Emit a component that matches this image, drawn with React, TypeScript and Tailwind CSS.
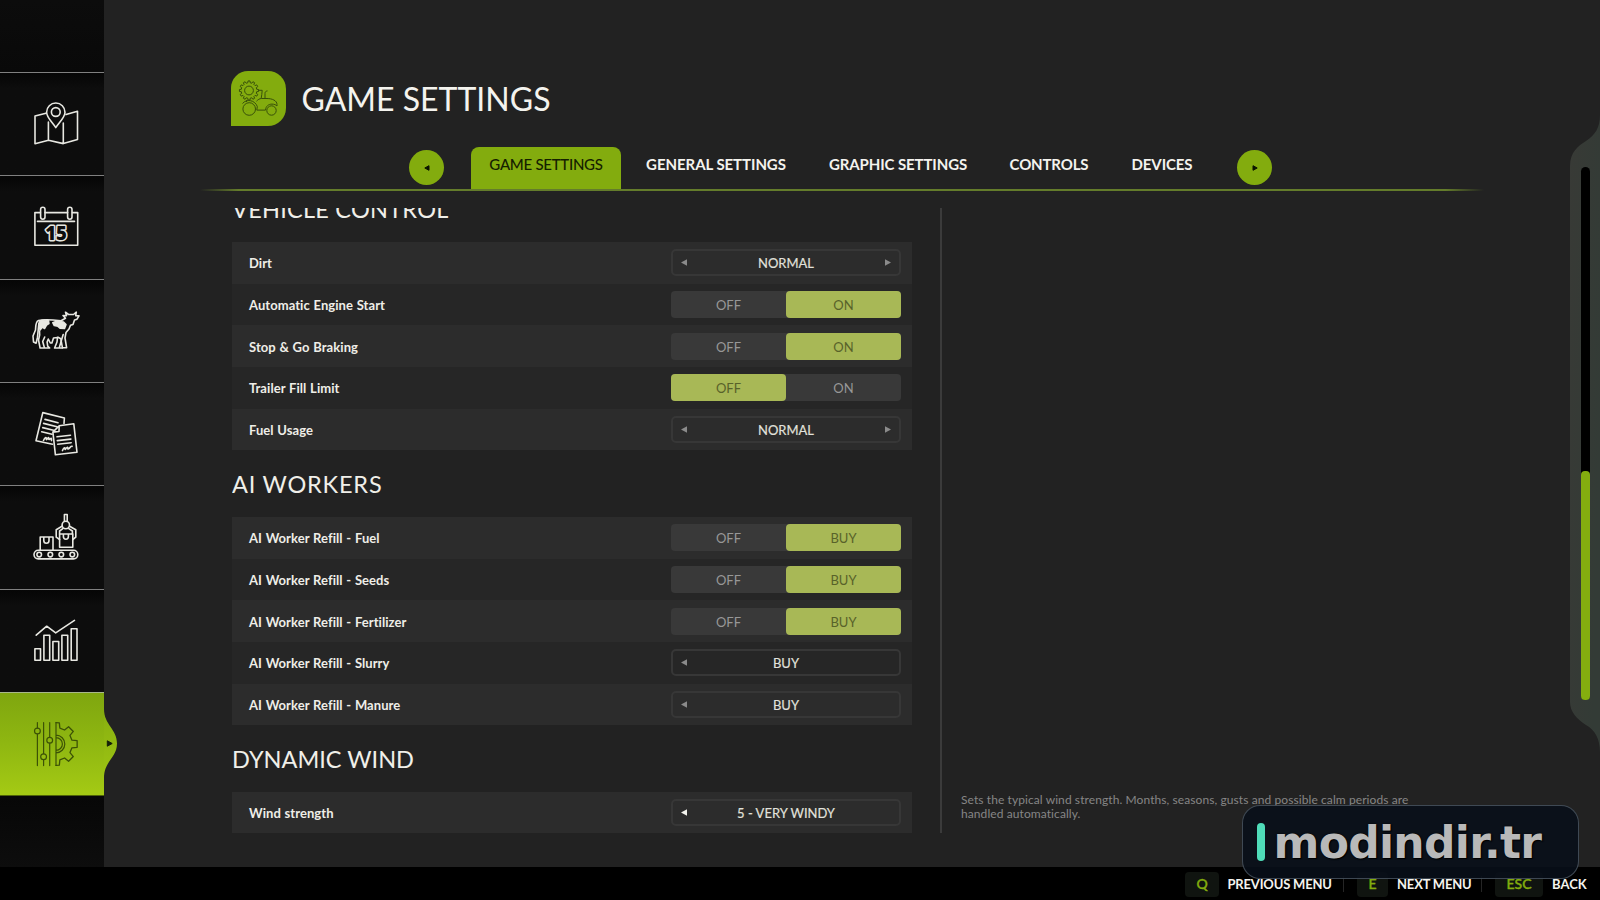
import type { ReactNode } from "react";
import clsx from "clsx";

type Setting = {
  label: string;
  kind: "select" | "toggle";
  value: string;
  options?: [string, string];
  next?: boolean;
  focused?: boolean;
};

const sections: { title: string; titleClass: string; rows: Setting[] }[] = [
  {
    title: "VEHICLE CONTROL",
    titleClass: "pt-px tracking-[0.25px]",
    rows: [
      { label: "Dirt", kind: "select", value: "NORMAL", next: true },
      { label: "Automatic Engine Start", kind: "toggle", value: "ON", options: ["OFF", "ON"] },
      { label: "Stop & Go Braking", kind: "toggle", value: "ON", options: ["OFF", "ON"] },
      { label: "Trailer Fill Limit", kind: "toggle", value: "OFF", options: ["OFF", "ON"] },
      { label: "Fuel Usage", kind: "select", value: "NORMAL", next: true },
    ],
  },
  {
    title: "AI WORKERS",
    titleClass: "pt-[3px] tracking-[0.8px]",
    rows: [
      { label: "AI Worker Refill - Fuel", kind: "toggle", value: "BUY", options: ["OFF", "BUY"] },
      { label: "AI Worker Refill - Seeds", kind: "toggle", value: "BUY", options: ["OFF", "BUY"] },
      { label: "AI Worker Refill - Fertilizer", kind: "toggle", value: "BUY", options: ["OFF", "BUY"] },
      { label: "AI Worker Refill - Slurry", kind: "select", value: "BUY" },
      { label: "AI Worker Refill - Manure", kind: "select", value: "BUY" },
    ],
  },
  {
    title: "DYNAMIC WIND",
    titleClass: "pt-[3px] tracking-normal",
    rows: [{ label: "Wind strength", kind: "select", value: "5 - VERY WINDY", focused: true }],
  },
];

// Outline of a cog between two angles (degrees, clockwise from the top)
function cogPath(cx: number, cy: number, root: number, tip: number, teeth: number, from: number, to: number) {
  const step = 360 / teeth;
  const full = to - from >= 330;
  const at = (r: number, deg: number) => {
    const a = ((deg - 90) * Math.PI) / 180;
    return `${(cx + r * Math.cos(a)).toFixed(2)} ${(cy + r * Math.sin(a)).toFixed(2)}`;
  };
  const pts: string[] = [];
  for (let t = from; t <= to + 0.01; t += step) {
    if (full || t - step * 0.3 >= from) {
      pts.push(at(root, t - step * 0.3), at(tip, t - step * 0.2));
    } else {
      pts.push(at(tip, t));
    }
    if (full || t + step * 0.3 <= to) {
      pts.push(at(tip, t + step * 0.2), at(root, t + step * 0.3));
    } else {
      pts.push(at(tip, t));
    }
  }
  return `M${pts.join("L")}${full ? "Z" : ""}`;
}

function MapIcon() {
  return (
    <>
      <path d="M46 41.2 35 44v27.8l13.500-3.600L63.300 71.600l14.200-4V39.200L66 42.600M48.400 50v18M63.300 51v20" />
      <path d="M55.800 55.600C53 51 46.600 45.600 46.600 40.200a9.200 9.200 0 0 1 18.400 0C65 45.600 58.600 51 55.800 55.600Z" />
      <circle cx="55.8" cy="40" r="4.4" />
    </>
  );
}

function CalendarIcon() {
  return (
    <>
      <path d="M40.400 37.600H34.900v32.700h42.800V37.600h-5.200M45 37.600h22.600M37.500 46.400h37" />
      <rect x="40.600" y="32.200" width="4.400" height="12" rx="2.200" />
      <rect x="67.600" y="32.200" width="4.400" height="12" rx="2.200" />
      <text
        x="56"
        y="65"
        textAnchor="middle"
        fontFamily="Open Sans"
        fontWeight="800"
        fontSize="18.500"
        strokeWidth="3"
        fill="#0d0d0d"
        style={{ paintOrder: "stroke" }}
      >
        15
      </text>
    </>
  );
}

function CowIcon() {
  return (
    <>
      <path d="M38.500 41.500c6-1.400 15-.6 22.500.2l4.500-2.500-2.500-2.700 3.500.2-1-3.500 3 2.300h5l2.800-2.300-.6 3.500 3.300.2-2 3.300-2.500.7-1.500 4.600-2.500.8-1.500 3.700-3 3.500-1 5.500 1.600 9.700h-4.200l-1.600-9-2.800-1.500M38.500 41.500c-3 1-2.600 5-3 9.500l-2.500 6 .5 6 2.600 1.200 1.400-6 .8-8 .6-6" />
      <path d="M39.500 52c.8 3.500-.4 7-1 9l1.600 8h9.600l-2-1.800-.6-4.200 1.200-3 2 4h1.600l1.600-5 4-.5-.5 4.500-2.400 6h4.600l2-7 2-6.500M44.500 69l-1.800-6.500 2-4.500M59.500 69h3" />
      <path
        fill="currentColor"
        d="M39.500 42c3-1 7-1 9-.4l.4 3-2.400 1.400-2 3.500-2-1.400-2.500 3-.8-5ZM56.500 42.200l7 .8 2.500 2.500-1.500 4-4.500-.4-2-1.800-3.700-.8-1.500-2.800Z"
      />
    </>
  );
}

function ContractsIcon() {
  return (
    <>
      <path d="m64 41.500.4-5.500-21.600-5.400-6.800 28.200L52.500 62.200" />
      <path d="m45 37.400 13 3.300M43.600 41.400l13.400 3.300M42.700 45.600l10.800 2.700M41.700 49.700l10.300 2.500M43.500 58.500c1.500-3 3-4 2.800-1.600s1.800-2 2.400-1.200-.8 2.500 1.200 1.300 1.600-.6 1.600 1.600" />
      <path d="m59.200 43.700 14.600-1.900 3.200 28.500-21.600 2.500-2.500-22.700 6.300-6.400Zm0 0-.2 5.800-6.100.6" />
      <path d="m57 54.800 13.500-1.600M57.300 58.600l13.600-1.500M57.700 62.200l13.500-1.500M62.500 68.600c1-2.800 2.600-3.800 2.500-1.700s1.700-2.200 2.500-1.700-.4 2.400 1.100 1.500 2.400-3 3.500-2.400" />
    </>
  );
}

function ProductionIcon() {
  return (
    <>
      <rect x="34" y="65.300" width="43.800" height="8.600" rx="4.300" />
      <circle cx="39.200" cy="69.600" r="2.300" />
      <circle cx="50.300" cy="69.600" r="2.300" />
      <circle cx="61.300" cy="69.600" r="2.300" />
      <circle cx="72.300" cy="69.600" r="2.300" />
      <path d="M40.200 65V52h12.800v13M43.800 52v3.500c0 3.700 5.200 3.700 5.200 0V52M59.600 49h13.200v13.300H59.600ZM63.400 49v2.500c0 3.600 5 3.600 5 0V49" />
      <path d="M64.400 36.300v-6.800h2.800v6.800M62 41.300l-5.800 3.400v7.500l3.400 2.300M69.600 41.300l6.200 3.400v7.500l-3 2.300M62.800 43.600l-3.200 2.400V49M68.800 43.600l3.600 2.400V49" />
      <circle cx="65.800" cy="40" r="3.700" />
    </>
  );
}

function StatisticsIcon() {
  return (
    <path d="M34.900 59.700h5.600v11.500h-5.600ZM43.900 46.200h5.800v25h-5.800ZM52.900 52.500h5.800v18.700h-5.800ZM61.900 46.200h5.800v25h-5.800ZM71.200 39.800H77v31.400h-5.800ZM36.200 46.200l10.500-9 9 6.700 18.800-12.500" />
  );
}

function SettingsIcon() {
  return (
    <>
      <path d="M37.400 30.500v5.600M37.400 42v31.600M43.600 30.500v31.200M43.600 67.600v6M49.700 30.500v14.800M49.700 51.200v22.400" />
      <circle cx="37.400" cy="39" r="2.900" />
      <circle cx="43.600" cy="64.700" r="2.900" />
      <circle cx="49.700" cy="48.300" r="2.900" />
      <path strokeWidth="1.300" d={cogPath(56, 52, 16.400, 21.400, 8, 0, 180)} />
      <path d="M56 30.600V73.400M56 43.200a8.800 8.800 0 0 1 0 17.600M56 45.600a6.400 6.400 0 0 1 0 12.800" />
    </>
  );
}

const menu: { id: string; icon: ReactNode; active?: boolean }[] = [
  { id: "map", icon: <MapIcon /> },
  { id: "calendar", icon: <CalendarIcon /> },
  { id: "animals", icon: <CowIcon /> },
  { id: "contracts", icon: <ContractsIcon /> },
  { id: "production", icon: <ProductionIcon /> },
  { id: "statistics", icon: <StatisticsIcon /> },
  { id: "settings", icon: <SettingsIcon />, active: true },
];

function Sidebar() {
  return (
    <aside className="flex w-[104px] shrink-0 flex-col bg-[#0c0c0c]">
      <div className="h-[72px] bg-gradient-to-b from-[#0c0c0c] to-[#090909]" />
      <div className="flex h-[723.200px] flex-col">
        {menu.map((item) => (
          <button
            key={item.id}
            className={clsx(
              "relative block min-h-0 w-full flex-1 border-t",
              item.active
                ? "border-[#a9b98a] bg-gradient-to-b from-[#7fa60f] via-[#8fb711] to-[#a4ca14] text-[#3c5206]"
                : "border-[#808080] bg-gradient-to-b from-[#060606] via-[#0d0d0d] via-15% to-[#0d0d0d] text-[#e8e8e2]",
            )}
          >
            <svg
              viewBox="0 0 104 102"
              className="block h-[102px] w-[104px] -translate-y-px"
              fill="none"
              stroke="currentColor"
              strokeWidth={item.active ? 1.2 : 1.6}
              strokeLinejoin="round"
              strokeLinecap="round"
            >
              {item.icon}
            </svg>
            {item.active && (
              <svg viewBox="0 0 14 70" className="absolute top-4 left-[104px] h-[70px] w-[14px]">
                <defs>
                  <linearGradient id="bump" x1="0" y1="0" x2="0" y2="1">
                    <stop offset="0" stopColor="#87af10" />
                    <stop offset="1" stopColor="#9dc413" />
                  </linearGradient>
                </defs>
                <path d="M0 0C0 16 13 20 13 34.500S0 52 0 69Z" fill="url(#bump)" />
                <path d="M3.300 31.800v5.400L8.200 34.500Z" fill="#14200a" stroke="#14200a" strokeLinejoin="round" />
              </svg>
            )}
          </button>
        ))}
      </div>
      <div className="flex-1 border-t border-[#4f6308] bg-gradient-to-b from-[#070707] to-[#0d0d0d]" />
    </aside>
  );
}

function Header() {
  return (
    <header className="flex h-[55px] items-center pl-[126.500px]">
      <div className="h-[55px] w-[55px] rounded-tl-[17px] rounded-tr-[18px] rounded-br-[18px] bg-[#83ac0e]">
        <svg viewBox="0 0 55 55" className="h-full w-full" fill="none" stroke="#38500a" strokeWidth="1" strokeLinejoin="round">
          <path d={cogPath(18, 19.5, 7.8, 9.6, 12, 0, 330)} />
          <path d="M15.500 31v-1.800M27 19.300h4.200c0 3.200-.8 5.400-1 8.200M34 27.500v-5c0-1.600.8-2.400 2.500-2.600" />
          <circle cx="18" cy="19.500" r="4.400" />
          <circle cx="18.200" cy="38" r="6.300" />
          <circle cx="40.500" cy="39.500" r="4.700" />
          {/* fender, chassis and hood */}
          <path d="M11.500 32.500c4-5 12.500-3.500 14.800 3l-.5 3.600h8.700M46 35v-1.500c0-4-5-6-10-6h-5.500c-2 0-3.500 1.200-5 2.700M34.500 39.100c.3-4 3-6 6.500-6 2.200 0 4 .8 5 1.900" />
        </svg>
      </div>
      <h1 className="ml-4 text-[32px] leading-none whitespace-nowrap text-[#f4f3ee]">GAME SETTINGS</h1>
    </header>
  );
}

function CircleButton({ dir }: { dir: "left" | "right" }) {
  return (
    <button className="flex h-[35px] w-[35px] items-center justify-center rounded-full bg-[#83ac0e]">
      <svg viewBox="0 0 8 8" className={clsx("h-2 w-2", dir === "left" && "rotate-180")}>
        <path d="M2 1.700v4.600L6.200 4Z" fill="#0b1400" stroke="#0b1400" strokeLinejoin="round" />
      </svg>
    </button>
  );
}

function Tabs() {
  return (
    <nav className="mt-[21px] h-[42px] text-[15px] leading-none font-bold whitespace-nowrap text-[#f4f3ee]">
      <div className="flex h-full items-start pl-[305px]">
        <div className="mt-[3px] mr-[27px]">
          <CircleButton dir="left" />
        </div>
        <button className="h-full w-[150px] rounded-t-lg bg-[#83ac0e] pb-2 text-[15px] font-medium tracking-[-0.280px] text-[#152000]">
          GAME SETTINGS
        </button>
        <div className="flex h-[34px] items-center">
          <button className="ml-[25px] w-[140px] tracking-[-0.060px]">GENERAL SETTINGS</button>
          <button className="ml-[42px] w-[140px] tracking-[-0.100px]">GRAPHIC SETTINGS</button>
          <button className="ml-[41px] w-[80px] tracking-[-0.150px]">CONTROLS</button>
          <button className="ml-[42px] w-[62px] tracking-[-0.100px]">DEVICES</button>
        </div>
        <div className="mt-[3px] ml-[44px]">
          <CircleButton dir="right" />
        </div>
      </div>
    </nav>
  );
}

function Arrow({ dir, bright }: { dir: "left" | "right"; bright?: boolean }) {
  return (
    <svg
      viewBox="0 0 6 7"
      className={clsx("h-[7px] w-[6px]", dir === "right" && "rotate-180", bright ? "text-[#f4f3ee]" : "text-[#8b8b8b]")}
    >
      <path d="M6 .3v6.400L0 3.500Z" fill="currentColor" />
    </svg>
  );
}

function SelectControl({ row }: { row: Setting }) {
  return (
    <div className="flex h-[27px] w-[230px] items-center justify-between rounded-[5px] border-2 border-[#373737] px-2 text-[#e2e2dd]">
      <Arrow dir="left" bright={row.focused} />
      <span className="pt-0.5 [-webkit-text-stroke:0.150px_#e2e2dd]">{row.value}</span>
      <span className="w-[6px]">{row.next && <Arrow dir="right" />}</span>
    </div>
  );
}

function ToggleControl({ row }: { row: Setting }) {
  return (
    <div className="flex h-[27px] w-[230px] rounded-[4px] bg-[#393939]">
      {row.options?.map((option) => (
        <button
          key={option}
          className={clsx(
            "flex flex-1 items-center justify-center rounded-[4px] pt-0.5",
            option === row.value ? "bg-[#a8b856] text-[#58622a]" : "text-[#979797]",
          )}
        >
          {option}
        </button>
      ))}
    </div>
  );
}

function SettingsList() {
  return (
    <div className="h-[625px] w-[679.500px] overflow-hidden">
      <div className="-mt-[32.400px]">
        {sections.map((section) => (
          <section key={section.title}>
            <h2
              className={clsx(
                "flex h-[66.400px] items-center text-[23.500px] leading-none whitespace-nowrap text-[#f0efe9]",
                section.titleClass,
              )}
            >
              {section.title}
            </h2>
            {section.rows.map((row, i) => (
              <div
                key={row.label}
                className={clsx(
                  "flex h-[41.700px] items-center justify-between pr-[10.500px] pl-[17px] text-[13px] leading-none whitespace-nowrap",
                  i % 2 === 0 ? "bg-[#2c2c2c]" : "bg-[#262626]",
                )}
              >
                <span className="pt-0.5 font-bold tracking-[0.060px] text-[#efeee8] [word-spacing:0.500px]">{row.label}</span>
                {row.kind === "select" ? <SelectControl row={row} /> : <ToggleControl row={row} />}
              </div>
            ))}
          </section>
        ))}
      </div>
    </div>
  );
}

function ScrollRail() {
  return (
    <div className="relative w-[30px] shrink-0">
      <svg viewBox="0 0 30 640" className="absolute top-[112px] left-0 h-[640px] w-[30px]">
        <defs>
          <linearGradient id="rail" x1="0" y1="0" x2="1" y2="0.500">
            <stop offset="0" stopColor="#383a36" />
            <stop offset="1" stopColor="#333b36" />
          </linearGradient>
        </defs>
        <path d="M30 3C30 16 25 23 16 29C8 34 0 40 0 54V590C0 600 7 607 16 613C25 618 30 627 30 640Z" fill="url(#rail)" />
      </svg>
      <div className="relative mt-[167px] ml-[10.500px] flex h-[533px] w-[9px] flex-col justify-end rounded-full bg-black">
        <div className="h-[229px] rounded-[4px] bg-[#84ad0f]" />
      </div>
    </div>
  );
}

function Key({ children, className }: { children: string; className: string }) {
  return (
    <kbd className={clsx("flex h-[25px] items-center justify-center rounded bg-[#101410] text-[14px] font-medium text-[#83ac0e]", className)}>
      <span className="[font-family:Lato,sans-serif] [-webkit-text-stroke:0.400px_#83ac0e]">{children}</span>
    </kbd>
  );
}

function Footer() {
  return (
    <footer className="flex h-[33px] items-center bg-black pt-px pl-[1185px] text-[13px] leading-none font-bold whitespace-nowrap text-[#f4f3ee]">
      <Key className="w-[34px]">Q</Key>
      <span className="ml-[8.500px] w-[104.500px] pt-px tracking-[-0.180px]">PREVIOUS MENU</span>
      <span className="ml-[11px] h-4 w-px bg-[#252525]" />
      <Key className="ml-[13px] w-[31px]">E</Key>
      <span className="ml-[9px] w-[73px] pt-px tracking-[-0.180px]">NEXT MENU</span>
      <span className="ml-[11px] h-4 w-px bg-[#252525]" />
      <Key className="ml-[13px] w-[48px]">ESC</Key>
      <span className="ml-[9px] pt-px">BACK</span>
    </footer>
  );
}

export default function App() {
  return (
    <div className="relative flex h-[900px] w-[1600px] flex-col overflow-hidden bg-[#222222] [font-family:Lato,sans-serif]">
      <div className="flex h-[867px]">
        <Sidebar />
        <main className="flex-1 pt-[71px]">
          <Header />
          <Tabs />
          <div className="ml-[96px] h-0.5 w-[1284px] bg-[linear-gradient(90deg,transparent,#647c2b_3%,#647c2b_97%,transparent)]" />
          <div className="mt-[17px] flex pl-[128px]">
            <SettingsList />
            <div className="ml-[28.500px] h-[625px] w-[1.500px] bg-[#3b3b3b]" />
            <p className="mt-[585px] ml-[19.500px] w-[480px] text-[12px] leading-[14px] tracking-[0.085px] text-[#868686]">
              Sets the typical wind strength. Months, seasons, gusts and possible calm periods are
              <br />
              handled automatically.
            </p>
          </div>
        </main>
        <ScrollRail />
      </div>
      <Footer />

      {/* Site badge */}
      <div className="absolute top-[805px] left-[1242px] flex h-[74px] w-[337px] items-center rounded-[18px] border border-[#8fa0ad]/40 bg-[#080f19]/88 pl-[14px]">
        <span className="h-[38px] w-2 rounded-full bg-[#4fdcb9]" />
        <span className="ml-[8.500px] pt-0.5 text-[44px] leading-none font-bold tracking-[-0.700px] text-[#b9b9b9] [font-family:'DejaVu_Sans',sans-serif] [text-shadow:0_0_2px_#000,1px_1px_1px_#000]">
          modindir.tr
        </span>
      </div>
    </div>
  );
}
